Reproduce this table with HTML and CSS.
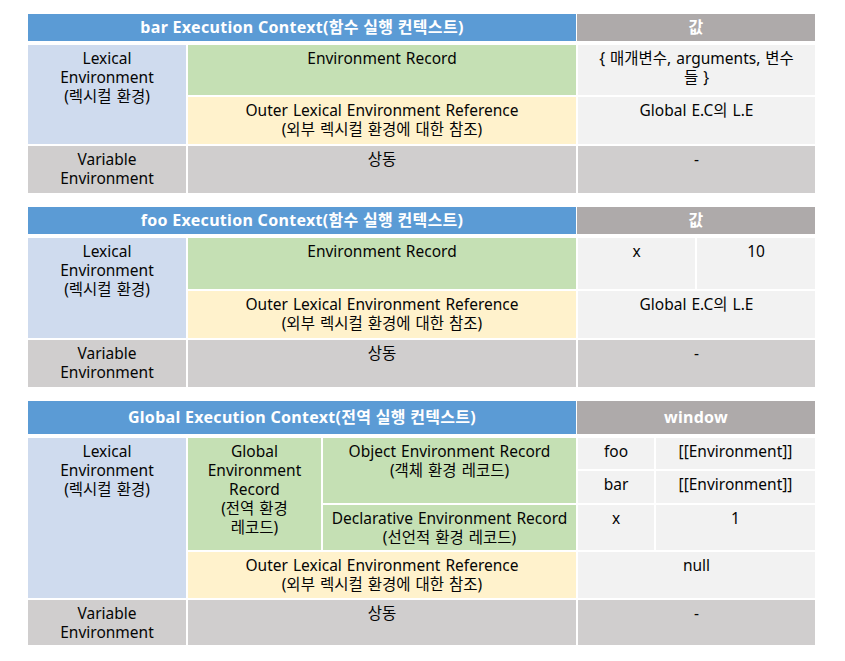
FILE: index.html
```html
<!DOCTYPE html>
<html lang="ko">
<head>
<meta charset="utf-8">
<link rel="stylesheet" href="styles.css">
</head>
<body>
<div class="page">
  <section class="ctx ctx-bar">
    <div class="head">
      <div class="h-main">bar Execution Context(함수 실행 컨텍스트)</div>
      <div class="h-val">값</div>
    </div>
    <div class="body body-fn">
      <div class="c lex span-2r">Lexical<br>Environment<br>(렉시컬 환경)</div>
      <div class="c green">Environment Record</div>
      <div class="c val">{ 매개변수, arguments, 변수<br>들 }</div>
      <div class="c yellow">Outer Lexical Environment Reference<br>(외부 렉시컬 환경에 대한 참조)</div>
      <div class="c val">Global E.C의 L.E</div>
      <div class="c gray">Variable<br>Environment</div>
      <div class="c gray">상동</div>
      <div class="c gray">-</div>
    </div>
  </section>

  <section class="ctx ctx-foo">
    <div class="head">
      <div class="h-main">foo Execution Context(함수 실행 컨텍스트)</div>
      <div class="h-val">값</div>
    </div>
    <div class="body body-foo">
      <div class="c lex span-2r">Lexical<br>Environment<br>(렉시컬 환경)</div>
      <div class="c green">Environment Record</div>
      <div class="c val">x</div>
      <div class="c val">10</div>
      <div class="c yellow">Outer Lexical Environment Reference<br>(외부 렉시컬 환경에 대한 참조)</div>
      <div class="c val span-2c">Global E.C의 L.E</div>
      <div class="c gray">Variable<br>Environment</div>
      <div class="c gray">상동</div>
      <div class="c gray span-2c">-</div>
    </div>
  </section>

  <section class="ctx ctx-global">
    <div class="head head-tall">
      <div class="h-main">Global Execution Context(전역 실행 컨텍스트)</div>
      <div class="h-val">window</div>
    </div>
    <div class="body body-global">
      <div class="c lex g-lex">Lexical<br>Environment<br>(렉시컬 환경)</div>
      <div class="c green g-ger">Global<br>Environment<br>Record<br>(전역 환경<br>레코드)</div>
      <div class="c green g-obj">Object Environment Record<br>(객체 환경 레코드)</div>
      <div class="c val">foo</div>
      <div class="c val">[[Environment]]</div>
      <div class="c val">bar</div>
      <div class="c val">[[Environment]]</div>
      <div class="c green">Declarative Environment Record<br>(선언적 환경 레코드)</div>
      <div class="c val">x</div>
      <div class="c val">1</div>
      <div class="c yellow span-2c">Outer Lexical Environment Reference<br>(외부 렉시컬 환경에 대한 참조)</div>
      <div class="c val span-2c">null</div>
      <div class="c gray">Variable<br>Environment</div>
      <div class="c gray span-2c">상동</div>
      <div class="c gray span-2c">-</div>
    </div>
  </section>
</div>
</body>
</html>
```

FILE: styles.css
```css
* { box-sizing: border-box; }
html, body { margin: 0; padding: 0; background: #ffffff; }
body {
  font-family: "Noto Sans", "Noto Sans CJK KR", sans-serif;
  font-size: 15.5px;
  line-height: 19px;
  color: #050505;
}
.page {
  padding: 14px 0 0 28px;
  display: flex;
  flex-direction: column;
  gap: 14px;
  width: 815px;
}
.ctx { display: flex; flex-direction: column; width: 787px; }
.head {
  display: grid;
  grid-template-columns: 548px 238px;
  column-gap: 1px;
  height: 27px;
  margin-bottom: 4px;
  color: #ffffff;
  font-weight: bold;
  font-size: 16px;
  letter-spacing: 0.3px;
}
.head-tall { height: 33px; }
.h-main, .h-val {
  display: flex;
  align-items: center;
  justify-content: center;
}
.h-main { background: #5b9bd5; }
.h-val { background: #aeaaaa; }
.body {
  display: grid;
  gap: 2px;
}
.body-fn {
  grid-template-columns: 158px 388px 237px;
  grid-template-rows: 50px 47px 47px;
}
.body-foo {
  grid-template-columns: 158px 388px 117px 118px;
  grid-template-rows: 51px 47px 47px;
}
.body-global {
  grid-template-columns: 158px 133px 253px 76px 159px;
  grid-template-rows: 31px 32px 45px 46px 45px;
}
.c {
  text-align: center;
  padding: 4px 2px 0;
  word-spacing: 1px;
}
.lex { background: #cfdbee; }
.green { background: #c5e0b4; }
.yellow { background: #fff2cc; }
.val { background: #f2f2f2; }
.gray { background: #d0cece; }
.span-2r { grid-row: span 2; }
.span-2c { grid-column: span 2; }
.g-lex { grid-row: 1 / 5; }
.g-ger { grid-row: 1 / 4; }
.g-obj { grid-row: 1 / 3; }
```
